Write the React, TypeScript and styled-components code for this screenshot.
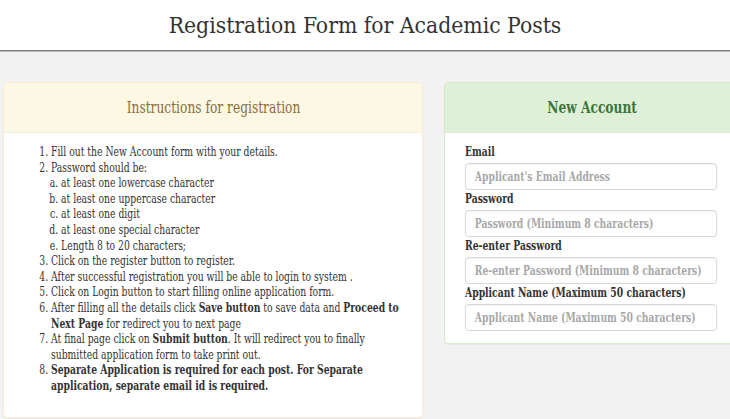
import React from "react";
import styled, { createGlobalStyle } from "styled-components";

// the page's serif is narrower than DejaVu Serif Condensed, so text blocks are squeezed horizontally
const SQUEEZE = 0.79;

const GlobalStyle = createGlobalStyle`
    html, body {
        margin: 0;
        padding: 0;
        background: #f2f2f2;
    }
    body {
        font-family: "DejaVu Serif Condensed", "DejaVu Serif", serif;
        font-size: 13px;
        line-height: 15.6px;
        color: #333;
    }
`

const Page = styled.div`
    width: 730px;
    height: 419px;
    overflow: hidden;
`
const TopBar = styled.header`
    height: 50px;
    background: #fff;
    border-bottom: 1px solid #7d7d7d;
    box-shadow: 0 1px 0 #bdbdbd;
    display: flex;
    align-items: center;
    justify-content: center;
`
const PageTitle = styled.h1`
    margin: 0;
    font-size: 22.7px;
    line-height: 28px;
    font-weight: normal;
    color: #333;
`
const Content = styled.main`
    display: flex;
    align-items: flex-start;
    gap: 21px;
    padding: 31px 0 0 3px;
`
const Panel = styled.section<{ $border: string; $width: number }>`
    box-sizing: border-box;
    width: ${p => p.$width}px;
    flex-shrink: 0;
    background: #fff;
    border: 1px solid ${p => p.$border};
    border-radius: 4px;
    box-shadow: 0 1px 1px rgba(0, 0, 0, 0.04);
    overflow: hidden;
`
const PanelHeading = styled.div<{ $bg: string; $color: string; $bold?: boolean }>`
    height: 49px;
    display: flex;
    align-items: center;
    justify-content: center;
    background: ${p => p.$bg};
    color: ${p => p.$color};
    font-size: 17px;
    font-weight: ${p => (p.$bold ? "bold" : "normal")};
    border-bottom: 1px solid rgba(0, 0, 0, 0.03);
`
const HeadingText = styled.span`
    display: inline-block;
    white-space: nowrap;
    transform: scaleX(0.8);
`
const Steps = styled.ol`
    box-sizing: border-box;
    width: ${Math.round(402 / SQUEEZE)}px;
    margin: 0;
    padding: 11px 0 23px ${(47 / SQUEEZE).toFixed(1)}px;
    transform: scaleX(${SQUEEZE});
    transform-origin: left top;
`
const SubSteps = styled.ol`
    margin: 0;
    padding-left: ${(10 / SQUEEZE).toFixed(1)}px;
    list-style-type: lower-alpha;
`
const FormBody = styled.div`
    box-sizing: border-box;
    width: ${Math.round(252 / SQUEEZE)}px;
    margin-left: 20px;
    padding: 10px 0 12px;
    display: flex;
    flex-direction: column;
    transform: scaleX(${SQUEEZE});
    transform-origin: left top;
`
const Label = styled.label`
    font-weight: bold;
    white-space: nowrap;
    padding: 1px 0 3.4px;
`
const Input = styled.input`
    height: 27px;
    box-sizing: border-box;
    width: 100%;
    margin: 0;
    border: 1.2px solid #d2d2d2;
    border-radius: 4px;
    padding: 0 ${(9 / SQUEEZE).toFixed(1)}px;
    font-family: inherit;
    font-size: 13px;
    font-weight: bold;
    color: #555;
    background: #fff;
    box-shadow: inset 0 1px 1px rgba(0, 0, 0, 0.05);
    &::placeholder {
        color: #a8a8a8;
    }
`

const fields = [
    { label: "Email", placeholder: "Applicant's Email Address", type: "email" },
    { label: "Password", placeholder: "Password (Minimum 8 characters)", type: "password" },
    { label: "Re-enter Password", placeholder: "Re-enter Password (Minimum 8 characters)", type: "password" },
    { label: "Applicant Name (Maximum 50 characters)", placeholder: "Applicant Name (Maximum 50 characters)", type: "text" },
]

export default function App() {
    return (
        <Page>
            <GlobalStyle />
            <TopBar>
                <PageTitle>Registration Form for Academic Posts</PageTitle>
            </TopBar>
            <Content>
                <Panel $border="#faebcc" $width={420}>
                    <PanelHeading $bg="#fcf8e3" $color="#8a6d3b">
                        <HeadingText>Instructions for registration</HeadingText>
                    </PanelHeading>
                    <Steps>
                        <li>Fill out the New Account form with your details.</li>
                        <li>
                            Password should be:
                            <SubSteps>
                                <li>at least one lowercase character</li>
                                <li>at least one uppercase character</li>
                                <li>at least one digit</li>
                                <li>at least one special character</li>
                                <li>Length 8 to 20 characters;</li>
                            </SubSteps>
                        </li>
                        <li>Click on the register button to register.</li>
                        <li>After successful registration you will be able to login to system .</li>
                        <li>Click on Login button to start filling online application form.</li>
                        <li>After filling all the details click <b>Save button</b> to save data and <b>Proceed to Next Page</b> for redirect you to next page</li>
                        <li>At final page click on <b>Submit button</b>. It will redirect you to finally submitted application form to take print out.</li>
                        <li><b>Separate Application is required for each post. For Separate application, separate email id is required.</b></li>
                    </Steps>
                </Panel>
                <Panel $border="#d6e9c6" $width={296}>
                    <PanelHeading $bg="#dff0d8" $color="#3c763d" $bold>
                        <HeadingText>New Account</HeadingText>
                    </PanelHeading>
                    <FormBody>
                        {fields.map(f => (
                            <React.Fragment key={f.label}>
                                <Label>{f.label}</Label>
                                <Input type={f.type} placeholder={f.placeholder} />
                            </React.Fragment>
                        ))}
                    </FormBody>
                </Panel>
            </Content>
        </Page>
    );
}
